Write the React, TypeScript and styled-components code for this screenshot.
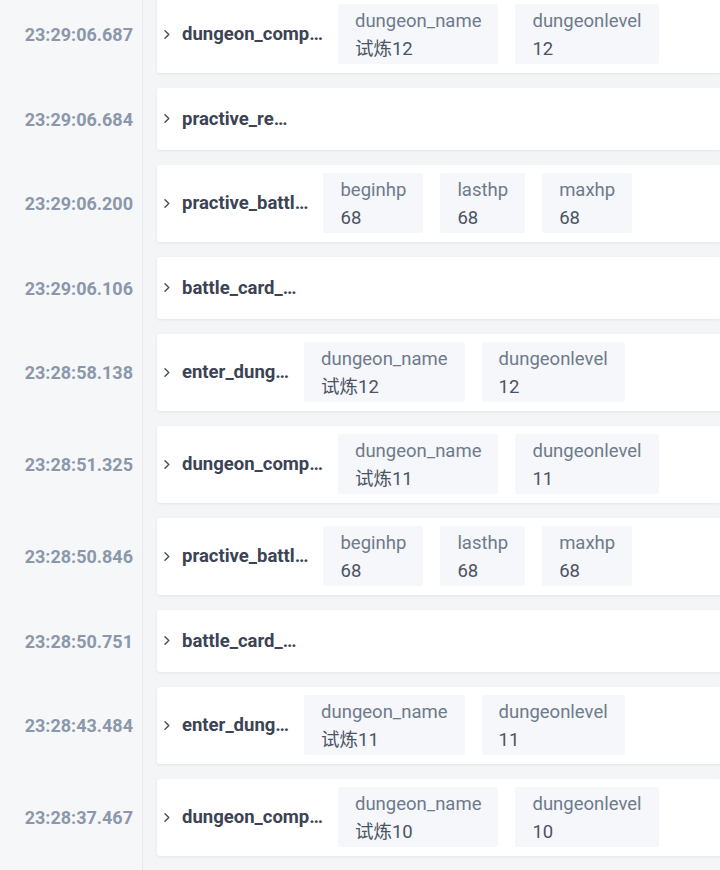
import React from "react";
import styled, { createGlobalStyle } from "styled-components";

const GlobalStyle = createGlobalStyle`
  html, body {
    margin: 0;
    padding: 0;
    background: #f4f5f7;
    overflow: hidden;
  }
  body {
    font-family: Roboto, "Noto Sans CJK SC", "Liberation Sans", sans-serif;
  }
`;

type Field = { label: string; value: string };
type Event = { time: string; name: string; fields: Field[] };

const events: Event[] = [
  {
    time: "23:29:06.687",
    name: "dungeon_comp…",
    fields: [
      { label: "dungeon_name", value: "试炼12" },
      { label: "dungeonlevel", value: "12" },
    ],
  },
  { time: "23:29:06.684", name: "practive_re…", fields: [] },
  {
    time: "23:29:06.200",
    name: "practive_battl…",
    fields: [
      { label: "beginhp", value: "68" },
      { label: "lasthp", value: "68" },
      { label: "maxhp", value: "68" },
    ],
  },
  { time: "23:29:06.106", name: "battle_card_…", fields: [] },
  {
    time: "23:28:58.138",
    name: "enter_dung…",
    fields: [
      { label: "dungeon_name", value: "试炼12" },
      { label: "dungeonlevel", value: "12" },
    ],
  },
  {
    time: "23:28:51.325",
    name: "dungeon_comp…",
    fields: [
      { label: "dungeon_name", value: "试炼11" },
      { label: "dungeonlevel", value: "11" },
    ],
  },
  {
    time: "23:28:50.846",
    name: "practive_battl…",
    fields: [
      { label: "beginhp", value: "68" },
      { label: "lasthp", value: "68" },
      { label: "maxhp", value: "68" },
    ],
  },
  { time: "23:28:50.751", name: "battle_card_…", fields: [] },
  {
    time: "23:28:43.484",
    name: "enter_dung…",
    fields: [
      { label: "dungeon_name", value: "试炼11" },
      { label: "dungeonlevel", value: "11" },
    ],
  },
  {
    time: "23:28:37.467",
    name: "dungeon_comp…",
    fields: [
      { label: "dungeon_name", value: "试炼10" },
      { label: "dungeonlevel", value: "10" },
    ],
  },
];

const Timeline = styled.div`
  display: flex;
  flex-direction: column;
  margin-top: -4px;
  overflow: hidden;
`;

const Row = styled.div`
  display: flex;
  align-items: stretch;
`;

const TimeCell = styled.div`
  width: 143px;
  flex: none;
  box-sizing: border-box;
  background: #f6f7f9;
  border-right: 1px solid #e4e7eb;
  display: flex;
  align-items: center;
  justify-content: flex-end;
  padding: 0 9px 15px 0;
  font-size: 18px;
  font-weight: 700;
  color: #8b97aa;
`;

const CardCol = styled.div`
  flex: 1;
  min-width: 0;
  padding: 0 0 15px 14px;
`;

const Card = styled.div`
  background: #ffffff;
  border-radius: 3px 0 0 3px;
  box-shadow: 0 1px 3px rgba(30, 40, 60, 0.08);
  min-height: 62px;
  box-sizing: border-box;
  padding: 8px 0 9px 6px;
  display: flex;
  align-items: center;
  overflow: hidden;
`;

const Chevron = styled.svg`
  width: 8px;
  height: 11px;
  flex: none;
  margin-right: 11px;
`;

const Name = styled.span`
  font-size: 18.5px;
  font-weight: 700;
  color: #3b4354;
  white-space: nowrap;
  margin-right: 15px;
`;

const Fields = styled.div`
  display: flex;
  gap: 17px;
`;

const Chip = styled.div`
  background: #f5f7fa;
  border-radius: 2px;
  padding: 3px 17px 1px;
  display: flex;
  flex-direction: column;
  font-size: 18.5px;
  line-height: 28px;
  white-space: nowrap;
`;

const Label = styled.span`
  color: #6f7a8b;
`;

const Value = styled.span`
  color: #4b5364;
`;

export default function App() {
  return (
    <>
      <GlobalStyle />
      <Timeline>
        {events.map((e, i) => (
          <Row key={i}>
            <TimeCell>{e.time}</TimeCell>
            <CardCol>
              <Card>
                <Chevron viewBox="0 0 8 11">
                  <path
                    d="M2 1.8 L5.8 5.5 L2 9.2"
                    fill="none"
                    stroke="#4b5364"
                    strokeWidth="1.5"
                    strokeLinecap="round"
                    strokeLinejoin="round"
                  />
                </Chevron>
                <Name>{e.name}</Name>
                {e.fields.length > 0 && (
                  <Fields>
                    {e.fields.map((f) => (
                      <Chip key={f.label}>
                        <Label>{f.label}</Label>
                        <Value>{f.value}</Value>
                      </Chip>
                    ))}
                  </Fields>
                )}
              </Card>
            </CardCol>
          </Row>
        ))}
      </Timeline>
    </>
  );
}
